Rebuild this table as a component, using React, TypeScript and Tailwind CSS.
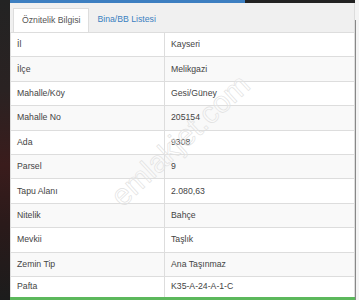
const rows: [string, string][] = [
  ["İl", "Kayseri"],
  ["İlçe", "Melikgazi"],
  ["Mahalle/Köy", "Gesi/Güney"],
  ["Mahalle No", "205154"],
  ["Ada", "9308"],
  ["Parsel", "9"],
  ["Tapu Alanı", "2.080,63"],
  ["Nitelik", "Bahçe"],
  ["Mevkii", "Taşlık"],
  ["Zemin Tip", "Ana Taşınmaz"],
  ["Pafta", "K35-A-24-A-1-C"],
];

export default function App() {
  return (
    <div
      className="relative flex h-[300px] w-[359px] overflow-hidden bg-[#1c1c1c] text-[8.7px] text-[#444]"
      style={{ fontFamily: '"Liberation Sans", Arial, sans-serif' }}
    >
      {/* dark left edge */}
      <div className="w-[10px] shrink-0 bg-[linear-gradient(180deg,#232323_0%,#2a2222_30%,#3a1c1c_55%,#2a1a1a_75%,#1c1c1c_100%)]" />

      <div className="flex w-[345px] shrink-0 flex-col">
        {/* top strip */}
        <div className="flex h-[3px] shrink-0">
          <div className="w-[235px] bg-[#3d7fc1]" />
          <div className="flex-1 bg-[#222]" />
        </div>

        {/* tabs */}
        <div className="flex h-[29px] shrink-0 items-end border-r border-[#ddd] bg-[#f0f0f0] pl-[3px]">
          <div className="flex h-[24px] items-center border border-b-0 border-[#ddd] bg-white px-[8px] text-[#555]">
            Öznitelik Bilgisi
          </div>
          <div className="flex h-[24px] items-center px-[8px] text-[#3a7fc0]">
            Bina/BB Listesi
          </div>
        </div>

        {/* table */}
        <div className="flex flex-col border-l border-r border-[#ddd] bg-white">
          {rows.map(([k, v], i) => (
            <div
              key={k}
              className={
                "flex border-t border-[#ddd] " +
                (i === rows.length - 1 ? "h-[21px] " : "h-[24.4px] ") +
                (i % 2 === 1 ? "bg-[#f9f9f9]" : "bg-white")
              }
            >
              <div className="flex w-[154px] shrink-0 items-center border-r border-[#ddd] pl-[6px]">
                {k}
              </div>
              <div className="flex flex-1 items-center pl-[6px]">{v}</div>
            </div>
          ))}
        </div>

        {/* green bottom line */}
        <div className="h-[3px] shrink-0 bg-[#5cb85c]" />
      </div>

      {/* right edge */}
      <div className="flex flex-1 bg-[#f4f4f4]">
        <div className="mt-[20px] w-px bg-[#888]" />
      </div>

      {/* watermark */}
      <div className="pointer-events-none absolute left-[180px] top-[140px] -translate-x-1/2 -translate-y-1/2 rotate-[-43deg] whitespace-nowrap text-[30px] text-white/20 [-webkit-text-stroke:0.6px_#e0e0e0]">
        emlakjet.com
      </div>
    </div>
  );
}
